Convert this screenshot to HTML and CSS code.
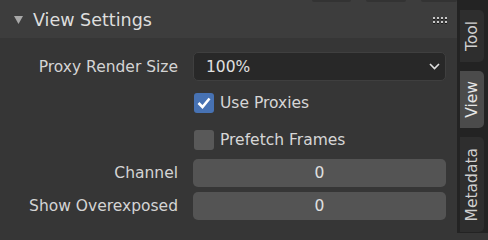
FILE: index.html
```html
<!DOCTYPE html>
<html>
<head>
<meta charset="utf-8">
<link rel="stylesheet" href="styles.css">
</head>
<body>
<div class="app">
  <div class="panel">
    <div class="header">
      <div class="top-edges"><span class="edge e1"></span><span class="edge e2"></span><span class="edge e3"></span></div>
      <svg class="disclosure" width="9" height="9" viewBox="0 0 9 9"><polygon points="0,1 9,1 4.5,9" fill="#a8a8a8"/></svg>
      <span class="title">View Settings</span>
      <span class="grip">
        <i></i><i></i><i></i><i></i><i></i><i></i><i></i><i></i>
      </span>
    </div>
    <div class="body">
      <div class="row r1">
        <span class="label">Proxy Render Size</span>
        <div class="dropdown">
          <span>100%</span>
          <svg width="11" height="7" viewBox="0 0 11 7"><polyline points="1,1 5.5,5.5 10,1" fill="none" stroke="#e0e0e0" stroke-width="1.6"/></svg>
        </div>
      </div>
      <div class="row r2">
        <span class="label"></span>
        <div class="check">
          <span class="box on"><svg width="14" height="12" viewBox="0 0 14 12"><polyline points="1.5,6 5.5,10 12.5,1.5" fill="none" stroke="#fff" stroke-width="2.6"/></svg></span>
          <span>Use Proxies</span>
        </div>
      </div>
      <div class="row r3">
        <span class="label"></span>
        <div class="check">
          <span class="box"></span>
          <span>Prefetch Frames</span>
        </div>
      </div>
      <div class="row r4">
        <span class="label">Channel</span>
        <div class="field">0</div>
      </div>
      <div class="row r5">
        <span class="label">Show Overexposed</span>
        <div class="field">0</div>
      </div>
    </div>
  </div>
  <div class="tabs">
    <div class="tab t-tool"><span>Tool</span></div>
    <div class="tab t-view active"><span>View</span></div>
    <div class="tab t-meta"><span>Metadata</span></div>
  </div>
</div>
</body>
</html>
```

FILE: styles.css
```css
html, body {
  margin: 0;
  padding: 0;
  background: #363636;
}
body {
  width: 488px;
  height: 233px;
  overflow: hidden;
  font-family: "DejaVu Sans", sans-serif;
  color: #d6d6d6;
}
.app {
  display: flex;
  width: 488px;
  height: 233px;
}
.panel {
  width: 457px;
  display: flex;
  flex-direction: column;
  background: #363636;
}
.header {
  position: relative;
  height: 38px;
  background: #3d3d3d;
  display: flex;
  align-items: center;
  padding-left: 14px;
  padding-right: 10px;
  box-sizing: border-box;
}
.top-edges {
  position: absolute;
  top: 0;
  left: 312px;
  display: flex;
  gap: 15px;
}
.edge {
  height: 2px;
  background: #333333;
  border-radius: 0 0 3px 3px;
}
.e1 { width: 39px; }
.e2 { width: 40px; }
.e3 { width: 36px; }
.disclosure {
  margin-top: 1px;
}
.title {
  margin-left: 10px;
  font-size: 17.5px;
  color: #dedede;
  flex: 1;
  margin-top: 1px;
}
.grip {
  display: grid;
  grid-template-columns: repeat(4, 2px);
  grid-template-rows: repeat(2, 2px);
  column-gap: 2px;
  row-gap: 2px;
  margin-top: 2px;
}
.grip i {
  display: block;
  width: 2px;
  height: 2px;
  background: #c8c8c8;
  box-shadow: 0 1px 0 #1a1a1a;
}
.body {
  display: flex;
  flex-direction: column;
  padding-right: 11px;
}
.row {
  display: grid;
  grid-template-columns: 178px 253px;
  column-gap: 15px;
  align-items: center;
  height: 28px;
  font-size: 15.5px;
}
.r1 { margin-top: 14px; height: 29px; }
.r2 { margin-top: 8px; }
.r3 { margin-top: 9px; }
.r4 { margin-top: 5px; }
.r5 { margin-top: 5px; }
.label {
  text-align: right;
  color: #d4d4d4;
  white-space: nowrap;
}
.dropdown {
  height: 29px;
  box-sizing: border-box;
  background: #282828;
  border: 1px solid #3f3f3f;
  border-radius: 5px;
  display: flex;
  align-items: center;
  justify-content: space-between;
  padding-left: 12px;
  padding-right: 5px;
  color: #e0e0e0;
}
.check {
  display: flex;
  align-items: center;
  gap: 6px;
  padding-left: 1px;
}
.box {
  width: 20px;
  height: 20px;
  border-radius: 3px;
  background: #595959;
  display: flex;
  align-items: center;
  justify-content: center;
}
.box.on {
  background: #4772b3;
}
.field {
  height: 28px;
  background: #545454;
  border-radius: 5px;
  display: flex;
  align-items: center;
  justify-content: center;
  color: #e0e0e0;
}
.tabs {
  width: 31px;
  background: #232323;
  display: flex;
  flex-direction: column;
  padding-left: 3px;
  box-sizing: border-box;
  overflow: hidden;
}
.tab {
  width: 24px;
  background: #2e2e2e;
  border-radius: 0 5px 5px 0;
  display: flex;
  align-items: center;
  justify-content: center;
  flex-shrink: 0;
}
.tab span {
  writing-mode: vertical-rl;
  transform: rotate(180deg);
  font-size: 15.5px;
  color: #d0d0d0;
}
.t-tool { margin-top: 10px; height: 52px; }
.t-view { margin-top: 9px; height: 57px; }
.t-meta { margin-top: 9px; height: 95px; }
.tab.active { background: #4b4b4b; }
.tab.active span { color: #e6e6e6; }
```
